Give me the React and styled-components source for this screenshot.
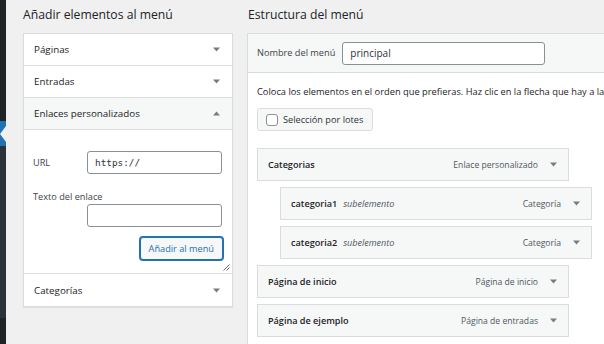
import React from "react";
import styled, { createGlobalStyle } from "styled-components";

const GlobalStyle = createGlobalStyle`
  html, body {
    margin: 0;
    padding: 0;
  }
  body {
    background: #f0f0f1;
    color: #1d2327;
    font-family: "Open Sans", "Noto Sans", sans-serif;
    overflow: hidden;
  }
`;

const Page = styled.div`
  display: flex;
  width: 604px;
  height: 344px;
  overflow: hidden;
`;

const AdminMenu = styled.div`
  flex: none;
  width: 6px;
  display: flex;
  flex-direction: column;
  background: #1d2327;
`;

const MenuBlock = styled.div`
  position: relative;
  flex: none;
  height: ${(p) => p.$h}px;
  background: ${(p) => p.$bg};
`;

const CurrentArrow = styled.span`
  position: absolute;
  right: 0;
  top: 5px;
  width: 0;
  height: 0;
  border-top: 8px solid transparent;
  border-bottom: 8px solid transparent;
  border-right: 6px solid #f0f0f1;
`;

const Content = styled.div`
  flex: none;
  display: flex;
  gap: 14px;
  padding-left: 17px;
`;

const Column = styled.div`
  flex: none;
  width: ${(p) => p.$w}px;
`;

const Heading = styled.h2`
  margin: 0;
  height: 33px;
  line-height: 30px;
  font-size: 12.2px;
  font-weight: 400;
  color: #1d2327;
  padding-left: ${(p) => (p.$indent ? 1 : 0)}px;
  box-sizing: border-box;
`;

const AccordionBox = styled.div`
  border: 1px solid #dcdcde;
  background: #fff;
  box-shadow: 0 1px 1px rgba(0, 0, 0, 0.06);
`;

const SectionTitle = styled.div`
  display: flex;
  align-items: center;
  justify-content: space-between;
  height: 32px;
  box-sizing: border-box;
  padding: 0 12px 0 10px;
  border-bottom: ${(p) => (p.$last ? "none" : "1px solid #dcdcde")};
  background: ${(p) => (p.$open ? "#f6f7f7" : "#fff")};
  font-size: 9.8px;
  color: #1d2327;
`;

const Caret = ({ up, color = "#787c82" }) => (
  <svg width="7" height="5" viewBox="0 0 7 5">
    <polygon points={up ? "0,4.5 7,4.5 3.5,0.5" : "0,0.5 7,0.5 3.5,4.5"} fill={color} />
  </svg>
);

const SectionBody = styled.div`
  position: relative;
  height: 144px;
  box-sizing: border-box;
  padding: 21px 10px 0 9px;
  border-bottom: 1px solid #dcdcde;
`;

const FieldRow = styled.div`
  display: flex;
  align-items: center;
  margin-bottom: ${(p) => p.$mb || 0}px;
`;

const FieldLabel = styled.label`
  display: block;
  flex: none;
  width: ${(p) => (p.$w ? `${p.$w}px` : "auto")};
  font-size: 9.2px;
  line-height: 14px;
  color: #3c434a;
`;

const TextInput = styled.div`
  flex: ${(p) => (p.$w ? "none" : 1)};
  width: ${(p) => (p.$w ? `${p.$w}px` : "auto")};
  height: 23px;
  box-sizing: border-box;
  margin-left: ${(p) => p.$ml || 0}px;
  padding: 0 7px;
  display: flex;
  align-items: center;
  border: 1px solid #8c8f94;
  border-radius: 3px;
  background: #fff;
  font-family: ${(p) =>
    p.$mono ? '"DejaVu Sans Mono", "Liberation Mono", monospace' : "inherit"};
  font-size: ${(p) => (p.$mono ? "9.4px" : "10px")};
  color: #2c3338;
`;

const ButtonRow = styled.div`
  display: flex;
  justify-content: flex-end;
  margin-top: 10px;
  margin-right: -1px;
`;

const SecondaryButton = styled.div`
  height: 23px;
  box-sizing: border-box;
  padding: 0 8px;
  display: flex;
  align-items: center;
  border: 1px solid #2271b1;
  box-shadow: 0 0 0 1px #2271b1;
  border-radius: 3px;
  background: #f6f7f7;
  color: #2271b1;
  font-size: 9.2px;
`;

const ResizeHandle = styled.svg`
  position: absolute;
  right: 2px;
  bottom: 2px;
`;

const MenuBox = styled.div`
  border: 1px solid #dcdcde;
  border-right: none;
  background: #fff;
  height: 320px;
`;

const MenuHeader = styled.div`
  display: flex;
  align-items: center;
  gap: 7px;
  height: 39px;
  box-sizing: border-box;
  padding-left: 9px;
  background: #f6f7f7;
  border-bottom: 1px solid #dcdcde;
`;

const MenuBody = styled.div`
  padding: 12px 0 0 9px;
`;

const Instructions = styled.p`
  margin: 0;
  white-space: nowrap;
  font-size: 9.3px;
  line-height: 14px;
  color: #1d2327;
`;

const BulkButton = styled.div`
  display: inline-flex;
  align-items: center;
  gap: 5px;
  margin-top: 9px;
  height: 23px;
  box-sizing: border-box;
  padding: 0 9px 0 8px;
  border: 1px solid #dcdcde;
  border-radius: 3px;
  background: #f6f7f7;
  font-size: 9.2px;
  color: #2c3338;
`;

const Checkbox = styled.span`
  width: 12px;
  height: 12px;
  box-sizing: border-box;
  border: 1px solid #8c8f94;
  border-radius: 3px;
  background: #fff;
`;

const ItemList = styled.ul`
  list-style: none;
  margin: 17px 0 0;
  padding: 0;
  display: flex;
  flex-direction: column;
  gap: 6px;
`;

const MenuItem = styled.li`
  display: flex;
  align-items: center;
  width: 312px;
  height: 33px;
  box-sizing: border-box;
  margin-left: ${(p) => p.$depth * 23}px;
  padding: 0 11px 0 10px;
  border: 1px solid #dcdcde;
  background: #f6f7f7;
`;

const ItemTitle = styled.span`
  font-size: 9.1px;
  font-weight: 600;
  color: #1d2327;
`;

const SubLabel = styled.span`
  margin-left: 6px;
  font-size: 9px;
  font-style: italic;
  color: #50575e;
`;

const ItemType = styled.span`
  margin-left: auto;
  margin-right: 12px;
  font-size: 8.6px;
  color: #50575e;
`;

const sections = [
  { title: "Páginas" },
  { title: "Entradas" },
  { title: "Enlaces personalizados", open: true },
];

const items = [
  { title: "Categorias", type: "Enlace personalizado", depth: 0 },
  { title: "categoria1", type: "Categoría", depth: 1, sub: true },
  { title: "categoria2", type: "Categoría", depth: 1, sub: true },
  { title: "Página de inicio", type: "Página de inicio", depth: 0 },
  { title: "Página de ejemplo", type: "Página de entradas", depth: 0 },
];

export default function App() {
  return (
    <>
      <GlobalStyle />
      <Page>
        <AdminMenu>
          <MenuBlock $h={121} $bg="#1d2327" />
          <MenuBlock $h={25} $bg="#2271b1">
            <CurrentArrow />
          </MenuBlock>
          <MenuBlock $h={172} $bg="#2c3338" />
        </AdminMenu>

        <Content>
          <Column $w={210}>
            <Heading>Añadir elementos al menú</Heading>
            <AccordionBox>
              {sections.map((s) => (
                <SectionTitle key={s.title} $open={s.open}>
                  {s.title}
                  <Caret up={s.open} />
                </SectionTitle>
              ))}
              <SectionBody>
                <FieldRow $mb={16}>
                  <FieldLabel $w={54}>URL</FieldLabel>
                  <TextInput $mono>https://</TextInput>
                </FieldRow>
                <FieldLabel>Texto del enlace</FieldLabel>
                <FieldRow>
                  <TextInput $ml={54} />
                </FieldRow>
                <ButtonRow>
                  <SecondaryButton>Añadir al menú</SecondaryButton>
                </ButtonRow>
                <ResizeHandle width="7" height="7" viewBox="0 0 7 7">
                  <path d="M0.5 6.5 L6.5 0.5 M3.5 6.5 L6.5 3.5" stroke="#50575e" strokeWidth="0.9" />
                </ResizeHandle>
              </SectionBody>
              <SectionTitle $last>
                Categorías
                <Caret />
              </SectionTitle>
            </AccordionBox>
          </Column>

          <Column $w={480}>
            <Heading $indent>Estructura del menú</Heading>
            <MenuBox>
              <MenuHeader>
                <FieldLabel>Nombre del menú</FieldLabel>
                <TextInput $w={203}>principal</TextInput>
              </MenuHeader>
              <MenuBody>
                <Instructions>
                  Coloca los elementos en el orden que prefieras. Haz clic en la flecha que hay a la
                  derecha del elemento para mostrar más opciones de configuración.
                </Instructions>
                <BulkButton>
                  <Checkbox />
                  Selección por lotes
                </BulkButton>
                <ItemList>
                  {items.map((it) => (
                    <MenuItem key={it.title} $depth={it.depth}>
                      <ItemTitle>{it.title}</ItemTitle>
                      {it.sub && <SubLabel>subelemento</SubLabel>}
                      <ItemType>{it.type}</ItemType>
                      <Caret />
                    </MenuItem>
                  ))}
                </ItemList>
              </MenuBody>
            </MenuBox>
          </Column>
        </Content>
      </Page>
    </>
  );
}
